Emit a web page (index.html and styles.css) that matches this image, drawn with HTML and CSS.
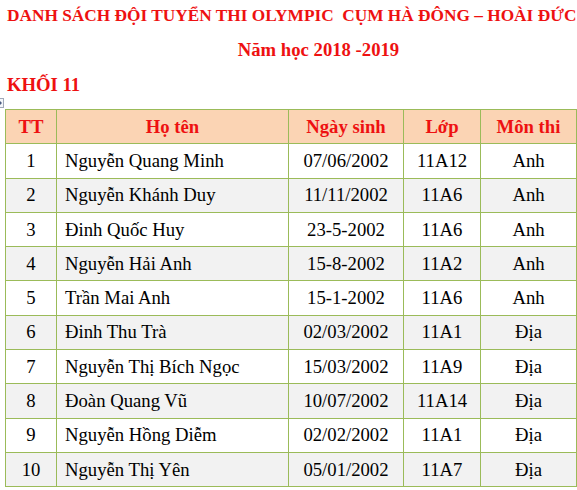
FILE: index.html
```html
<!DOCTYPE html>
<html lang="vi">
<head>
<meta charset="utf-8">
<link rel="stylesheet" href="styles.css">
</head>
<body>
<div class="page">
  <div class="title">DANH SÁCH ĐỘI TUYỂN THI OLYMPIC&nbsp; CỤM HÀ ĐÔNG – HOÀI ĐỨC</div>
  <div class="subtitle">Năm học 2018 -2019</div>
  <div class="grade">KHỐI 11</div>
  <div class="table-wrap">
    <span class="handle"></span>
    <table class="list">
      <colgroup>
        <col class="c-tt"><col class="c-name"><col class="c-dob"><col class="c-class"><col class="c-sub">
      </colgroup>
      <thead>
        <tr><th>TT</th><th>Họ tên</th><th>Ngày sinh</th><th>Lớp</th><th>Môn thi</th></tr>
      </thead>
      <tbody>
        <tr><td class="ctr">1</td><td>Nguyễn Quang Minh</td><td class="ctr">07/06/2002</td><td class="ctr">11A12</td><td class="ctr">Anh</td></tr>
        <tr><td class="ctr">2</td><td>Nguyễn Khánh Duy</td><td class="ctr">11/11/2002</td><td class="ctr">11A6</td><td class="ctr">Anh</td></tr>
        <tr><td class="ctr">3</td><td>Đinh Quốc Huy</td><td class="ctr">23-5-2002</td><td class="ctr">11A6</td><td class="ctr">Anh</td></tr>
        <tr><td class="ctr">4</td><td>Nguyễn Hải Anh</td><td class="ctr">15-8-2002</td><td class="ctr">11A2</td><td class="ctr">Anh</td></tr>
        <tr><td class="ctr">5</td><td>Trần Mai Anh</td><td class="ctr">15-1-2002</td><td class="ctr">11A6</td><td class="ctr">Anh</td></tr>
        <tr><td class="ctr">6</td><td>Đinh Thu Trà</td><td class="ctr">02/03/2002</td><td class="ctr">11A1</td><td class="ctr">Địa</td></tr>
        <tr><td class="ctr">7</td><td>Nguyễn Thị Bích Ngọc</td><td class="ctr">15/03/2002</td><td class="ctr">11A9</td><td class="ctr">Địa</td></tr>
        <tr><td class="ctr">8</td><td>Đoàn Quang Vũ</td><td class="ctr">10/07/2002</td><td class="ctr">11A14</td><td class="ctr">Địa</td></tr>
        <tr><td class="ctr">9</td><td>Nguyễn Hồng Diễm</td><td class="ctr">02/02/2002</td><td class="ctr">11A1</td><td class="ctr">Địa</td></tr>
        <tr><td class="ctr">10</td><td>Nguyễn Thị Yên</td><td class="ctr">05/01/2002</td><td class="ctr">11A7</td><td class="ctr">Địa</td></tr>
      </tbody>
    </table>
  </div>
</div>
</body>
</html>
```

FILE: styles.css
```css
html, body {
  margin: 0;
  padding: 0;
  background: #ffffff;
}
.page {
  font-family: "Liberation Serif", "Times New Roman", serif;
  color: #000;
  width: 577px;
}
.title {
  color: #ee1111;
  font-weight: bold;
  font-size: 17.3px;
  line-height: 20px;
  padding: 6px 0 0 7px;
  white-space: nowrap;
}
.subtitle {
  color: #ee1111;
  font-weight: bold;
  font-size: 18.7px;
  line-height: 22px;
  text-align: center;
  padding: 13px 0 0 60px;
}
.grade {
  color: #ee1111;
  font-weight: bold;
  font-size: 18.7px;
  line-height: 22px;
  padding: 13px 0 0 7px;
}
.table-wrap {
  position: relative;
  padding: 13px 0 0 5px;
}
.handle {
  position: absolute;
  left: 0;
  top: 2px;
  width: 3px;
  height: 8px;
  border: 1px solid #a0a8b8;
  border-left: none;
  background: #f4f6fa;
}
.handle::after {
  content: "";
  position: absolute;
  left: 0;
  top: 2px;
  border-left: 2px solid #4a5a80;
  border-top: 2px solid transparent;
  border-bottom: 2px solid transparent;
}
.list {
  border-collapse: collapse;
  table-layout: fixed;
  width: 571px;
  font-size: 18.7px;
}
.c-tt { width: 51px; }
.c-name { width: 232px; }
.c-dob { width: 115px; }
.c-class { width: 77px; }
.c-sub { width: 96px; }
.list th, .list td {
  border: 1px solid #9bbb59;
  height: 33.3px;
  padding: 0;
  vertical-align: middle;
  white-space: nowrap;
}
.list th {
  background: #fbd4b4;
  color: #ee1111;
  font-weight: bold;
  text-align: center;
}
.list td {
  padding-left: 8px;
}
.list td.ctr {
  text-align: center;
  padding-left: 0;
}
.list tbody tr:nth-child(even) td {
  background: #f2f2f2;
}
```
